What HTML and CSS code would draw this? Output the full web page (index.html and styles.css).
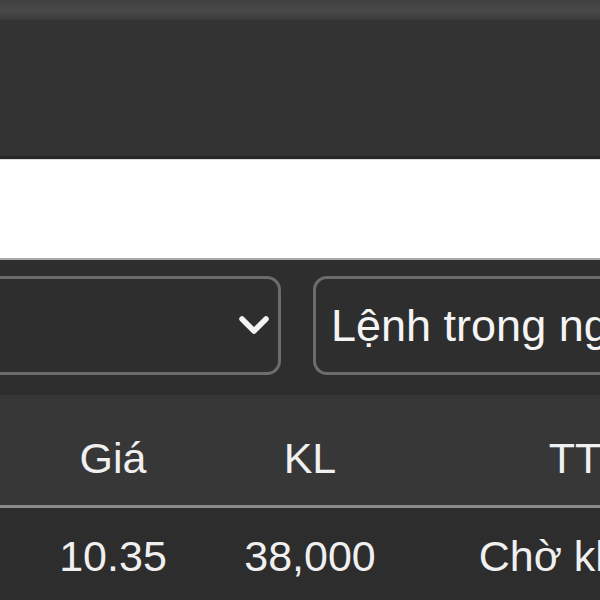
FILE: index.html
```html
<!DOCTYPE html>
<html lang="vi">
<head>
<meta charset="utf-8">
<link rel="stylesheet" href="styles.css">
<title>Lệnh trong ngày</title>
</head>
<body>
<div class="page">
  <div class="topbar"></div>
  <div class="header"></div>
  <div class="white-band"></div>
  <div class="filters">
    <div class="select select-left">
      <span class="select-text"></span>
      <svg class="chevron" width="32" height="22" viewBox="0 0 32 22"><polyline points="4,4 16,16 28,4" fill="none" stroke="#f4f4f4" stroke-width="5.5" stroke-linecap="round" stroke-linejoin="round"/></svg>
    </div>
    <div class="select select-right">
      <span class="select-text">Lệnh trong ngày</span>
    </div>
  </div>
  <div class="table">
    <div class="row head">
      <div class="cell">Giá</div>
      <div class="cell">KL</div>
      <div class="cell">TT</div>
    </div>
    <div class="row body-row">
      <div class="cell">10.35</div>
      <div class="cell">38,000</div>
      <div class="cell">Chờ khớp</div>
    </div>
  </div>
</div>
</body>
</html>
```
FILE: styles.css
```css
html, body {
  margin: 0;
  padding: 0;
  background: #2d2d2d;
  overflow: hidden;
}
.page {
  width: 600px;
  height: 600px;
  overflow: hidden;
  font-family: "Liberation Sans", Arial, sans-serif;
  color: #f2f2f2;
}
.topbar {
  height: 20px;
  background: linear-gradient(#3f3f3f, #4a4a4a 55%, #3a3a3a);
}
.header {
  height: 136px;
  background: #333333;
  border-bottom: 3px solid #262626;
}
.white-band {
  height: 98px;
  background: #ffffff;
  border-top: 1px solid #dcdcdc;
  border-bottom: 2px solid #a8a8a8;
}
.filters {
  display: flex;
  gap: 32px;
  padding: 16px 0 20px;
  background: #2e2e2e;
}
.select {
  box-sizing: border-box;
  height: 99px;
  border: 3px solid #6c6c6c;
  border-radius: 14px;
  display: flex;
  align-items: center;
  flex: 0 0 auto;
}
.select-left {
  width: 302px;
  margin-left: -21px;
  justify-content: flex-end;
  padding-right: 8px;
}
.select-right {
  width: 420px;
  padding-left: 15px;
}
.select-text {
  font-size: 45px;
  line-height: 1;
  white-space: nowrap;
  color: #f4f4f4;
}
.chevron {
  display: block;
}
.table {
  width: 760px;
}
.row {
  display: grid;
  grid-template-columns: 226px 168px 362px;
  align-items: center;
}
.head {
  height: 113px;
  box-sizing: border-box;
  padding-top: 17px;
  background: #373737;
  border-bottom: 3px solid #8a8a8a;
}
.body-row {
  height: 96px;
  background: #2d2d2d;
}
.cell {
  font-size: 43px;
  line-height: 1;
  text-align: center;
  white-space: nowrap;
  color: #f0f0f0;
}
```
